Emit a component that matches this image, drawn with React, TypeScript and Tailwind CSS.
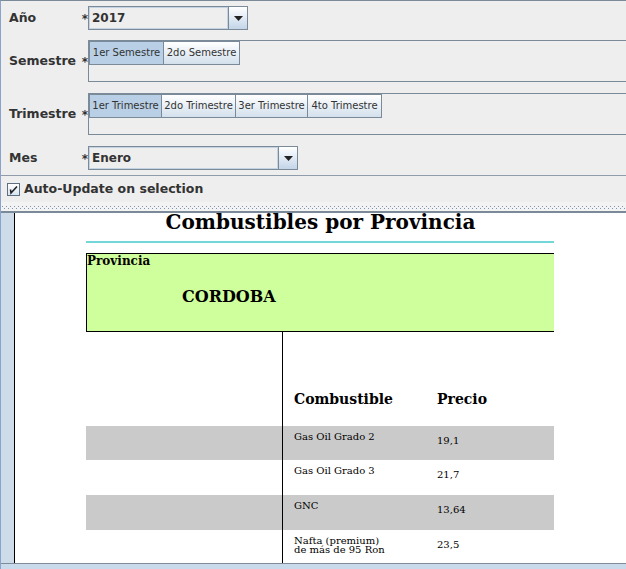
import React from "react";

function Combo({ value, w }: { value: string; w: string }) {
  return (
    <div className={`flex h-[24px] border border-[#7a8a99] ${w}`}>
      <div className="flex flex-1 items-center border border-[#c4d3e2] bg-[#eeeeee] pl-[2px] text-[12px] font-bold leading-none text-[#333333]">
        {value}
      </div>
      <div className="flex w-[19px] items-center justify-center border-l border-[#7a8a99] bg-gradient-to-b from-white to-[#c3d5e8]">
        <svg width="9" height="5" viewBox="0 0 9 5">
          <path d="M0 0H9L4.5 5Z" fill="#222222" />
        </svg>
      </div>
    </div>
  );
}

function Toggle({ label, selected, w, first }: { label: string; selected?: boolean; w: string; first?: boolean }) {
  return (
    <div
      className={`flex h-[24px] items-center justify-center border border-[#7a8a99] text-[10px] leading-none text-[#333333] ${w} ${
        first ? "" : "-ml-px"
      } ${selected ? "bg-[#b8cfe5]" : "bg-gradient-to-b from-white to-[#d3e0ec]"}`}
    >
      {label}
    </div>
  );
}

function Label({ text }: { text: string }) {
  return (
    <div className="flex w-[87px] shrink-0 items-center justify-between pl-[8px] pt-[1px] text-[12.5px] font-bold leading-none text-[#333333]">
      <span>{text}</span>
      <span className="text-[12px]">*</span>
    </div>
  );
}

const rows = [
  { name: ["Gas Oil Grado 2"], price: "19,1", gray: true, h: "h-[34px]" },
  { name: ["Gas Oil Grado 3"], price: "21,7", gray: false, h: "h-[35px]" },
  { name: ["GNC"], price: "13,64", gray: true, h: "h-[35px]" },
  { name: ["Nafta (premium)", "de más de 95 Ron"], price: "23,5", gray: false, h: "h-[35px]" },
];

export default function App() {
  return (
    <div className="flex h-[569px] w-[626px] flex-col overflow-hidden border-l border-t border-l-[#8aa3cc] border-t-[#7a8a99] bg-[#eeeeee] font-['DejaVu_Sans',sans-serif]">
      {/* Año */}
      <div className="mt-[5px] flex h-[24px] items-center">
        <Label text="Año" />
        <Combo value="2017" w="w-[160px]" />
      </div>
      {/* Semestre */}
      <div className="mt-[10px] flex h-[42px] items-center">
        <Label text="Semestre" />
        <div className="flex h-[42px] flex-1 items-start border-b border-l border-t border-[#7a8a99]">
          <Toggle label="1er Semestre" selected w="w-[75px]" first />
          <Toggle label="2do Semestre" w="w-[77px]" />
        </div>
      </div>
      {/* Trimestre */}
      <div className="mt-[11px] flex h-[42px] items-center">
        <Label text="Trimestre" />
        <div className="flex h-[42px] flex-1 items-start border-b border-l border-t border-[#7a8a99]">
          <Toggle label="1er Trimestre" selected w="w-[73px]" first />
          <Toggle label="2do Trimestre" w="w-[75px]" />
          <Toggle label="3er Trimestre" w="w-[73px]" />
          <Toggle label="4to Trimestre" w="w-[75px]" />
        </div>
      </div>
      {/* Mes */}
      <div className="mt-[11px] flex h-[24px] items-center">
        <Label text="Mes" />
        <Combo value="Enero" w="w-[210px]" />
      </div>
      <div className="mt-[5px] h-[1px] bg-[#8f9cab]" />
      {/* Auto update */}
      <div className="flex h-[26px] items-center gap-[4px] pl-[6px]">
        <div className="flex h-[13px] w-[13px] items-center justify-center border border-[#5f6f80] bg-gradient-to-b from-white to-[#d8e4f0]">
          <svg width="11" height="11" viewBox="0 0 11 11">
            <path d="M2.5 5.5 L3 9 L9 2.5" fill="none" stroke="#222222" strokeWidth="1.6" />
          </svg>
        </div>
        <span className="pt-[1px] text-[12.5px] font-bold leading-none text-[#333333]">Auto-Update on selection</span>
      </div>
      {/* splitter */}
      <div className="h-[9px] bg-[#f3f3f3]">
        <svg width="100%" height="9">
          <defs>
            <pattern id="dots" width="4" height="4" patternUnits="userSpaceOnUse">
              <rect x="1" y="0" width="1" height="1" fill="#7f96b0" />
              <rect x="3" y="2" width="1" height="1" fill="#7f96b0" />
            </pattern>
          </defs>
          <rect x="0" y="3" width="100%" height="4" fill="url(#dots)" />
        </svg>
      </div>
      <div className="h-[2px] bg-[#7a8a99]" />
      {/* report panel */}
      <div className="flex h-[350px] overflow-hidden">
        <div className="w-[13px] shrink-0 bg-[#cddce8]" />
        <div className="w-[1px] shrink-0 bg-black" />
        <div className="flex-1 overflow-hidden bg-white font-['DejaVu_Serif',serif] text-black">
          <div className="text-center text-[20px] font-bold leading-[19px]">Combustibles por Provincia</div>
          <div className="ml-[71px] mt-[9px] h-[2px] w-[468px] bg-[#73d6d9]" />
          <div className="ml-[71px] mt-[10px] h-[79px] w-[468px] border-b border-l border-t border-black bg-[#cfff9c]">
            <div className="pt-[1px] text-[12px] font-bold leading-[12px]">Provincia</div>
            <div className="mt-[22px] pl-[95px] text-[16px] font-bold leading-[16px]">CORDOBA</div>
          </div>
          <div className="ml-[71px] w-[468px]">
            <div className="flex h-[94px]">
              <div className="w-[197px] shrink-0 border-r border-black" />
              <div className="w-[154px] pl-[11px] pt-[60px] text-[14px] font-bold leading-[14px]">Combustible</div>
              <div className="pt-[60px] text-[14px] font-bold leading-[14px]">Precio</div>
            </div>
            {rows.map((r, i) => (
              <div key={i} className={`flex ${r.h} ${r.gray ? "bg-[#cacaca]" : "bg-white"}`}>
                <div className="w-[197px] shrink-0 border-r border-black" />
                <div className="w-[154px] pl-[11px] pt-[6px] text-[10px] leading-[9px]">
                  {r.name.map((n, j) => (
                    <div key={j}>{n}</div>
                  ))}
                </div>
                <div className="pt-[10px] text-[10px] leading-[9px]">{r.price}</div>
              </div>
            ))}
          </div>
        </div>
      </div>
      <div className="h-[1px] bg-[#7f8c97]" />
      <div className="h-[5px] bg-[#c9dbea]" />
    </div>
  );
}
